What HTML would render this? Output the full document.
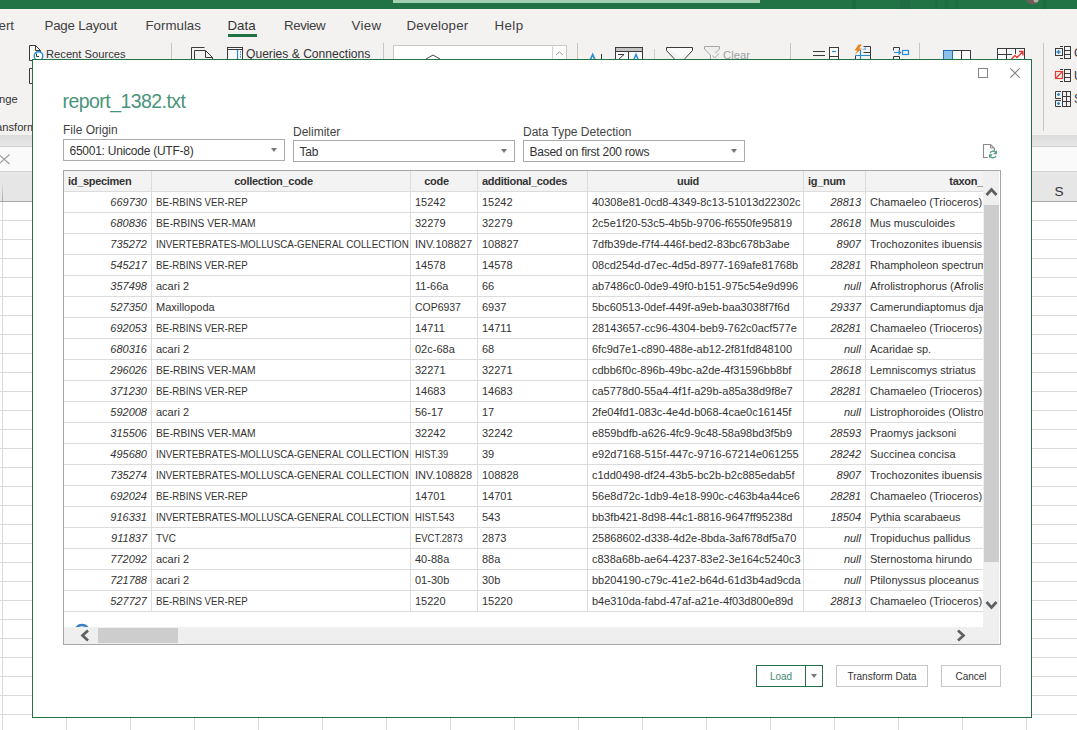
<!DOCTYPE html>
<html><head><meta charset="utf-8">
<style>
*{margin:0;padding:0}
html,body{width:1077px;height:730px;overflow:hidden;background:#fff}
body{position:relative;font-family:"Liberation Sans",sans-serif;color:#333}
.a{position:absolute}
/* excel bg */
#topbar{left:0;top:0;width:1077px;height:9px;background:#217346}
#search{left:393px;top:0;width:367px;height:3px;background:#a3cfb3}
#ribbon{left:0;top:9px;width:1077px;height:126px;background:#f3f2f1}
.tab{position:absolute;top:17.5px;font-size:13.3px;color:#404040;white-space:nowrap;line-height:15px}
#uline{left:228px;top:34px;width:29px;height:3px;background:#217346}
.rt{position:absolute;font-size:11.2px;color:#333;white-space:nowrap;line-height:13px}
.sep{position:absolute;width:1px;background:#c8c6c4}
#shadow{left:0;top:135px;width:1077px;height:12px;background:linear-gradient(#dcdcdc,#e8e8e8);border-bottom:1px solid #cfcfcf;box-sizing:border-box}
#fbar{left:0;top:147px;width:1077px;height:24px;background:#fafafa}
#colhdr{left:0;top:171px;width:1077px;height:31px;background:#e6e6e6;border-top:1px solid #d4d4d4;border-bottom:1px solid #a9a9a9;box-sizing:border-box}
.gv{position:absolute;top:202px;width:1px;height:528px;background:#dadada}
.gh{position:absolute;left:0;width:1077px;height:1px;background:#dadada}
/* dialog */
#dlg{left:32px;top:59px;width:1000px;height:659px;background:#fff;border:1px solid #217346;box-sizing:border-box}
#title{left:62.5px;top:90px;font-size:19.5px;letter-spacing:-0.55px;line-height:22px;color:#4a957a;white-space:nowrap}
.lbl{position:absolute;font-size:12px;line-height:14px;color:#444;white-space:nowrap}
.dd{position:absolute;height:22px;width:222px;border:1px solid #ababab;box-sizing:border-box;background:#fff}
.ddt{position:absolute;left:5.5px;top:4px;font-size:12px;letter-spacing:-0.25px;line-height:14px;color:#333;white-space:nowrap}
.dda{position:absolute;top:8px;width:0;height:0;border-left:3px solid transparent;border-right:3px solid transparent;border-top:4px solid #777}
/* table */
#tbl{left:63px;top:170px;width:938px;height:475px;border:1px solid #a6a6a6;box-sizing:border-box;background:#fff}
#thead{left:64px;top:171px;width:935px;height:20px;background:#f3f3f3}
.hl{position:absolute;left:64px;width:919px;height:1px;background:#dcdcdc}
.vl{position:absolute;top:171px;width:1px;height:440px;background:#dcdcdc}
#clip{left:0;top:0;width:983px;height:730px;overflow:hidden}
.c{position:absolute;height:20px;line-height:20px;font-size:11px;color:#333;white-space:nowrap;overflow:hidden;padding-left:4px;box-sizing:border-box}
.c.num{text-align:right;padding-left:0;padding-right:4px;font-style:italic}
.sx{display:inline-block;transform-origin:0 50%}
.hc{position:absolute;height:20px;line-height:20px;font-size:11px;font-weight:bold;color:#333;white-space:nowrap;overflow:hidden;letter-spacing:-0.3px}
#vtrack{left:983px;top:171px;width:16px;height:456px;background:#efefef}
#vthumb{left:984px;top:205px;width:15px;height:357px;background:#cdcdcd}
#htrack{left:64px;top:627px;width:935px;height:17px;background:#efefef}
#hthumb{left:98px;top:628px;width:80px;height:15px;background:#cdcdcd}
/* buttons */
.btn{position:absolute;top:665px;height:22px;border:1px solid #c6c6c6;box-sizing:border-box;font-size:10px;line-height:22px;text-align:center;color:#333;background:#fff}
</style></head><body>
<!-- Excel background -->
<div class="a" id="topbar"></div>
<div class="a" id="search"></div>
<svg class="a" style="left:760px;top:0" width="317" height="9"><path d="M92 0h4v9h-4z" fill="#1d6a40"/><path d="M140 0h10v9h-10zM175 0h3v9h-3zM185 0h3v9h-3zM195 0h3v9h-3z" fill="#1f6e43"/><circle cx="1032.5" cy="-2" r="6.5" transform="translate(-760 0)" fill="#6e5d58"/><circle cx="1036" cy="0" r="2.5" transform="translate(-760 0)" fill="#b9aaa5"/><path d="M1045 9A14 14 0 0 1 1075 0" transform="translate(-760 0)" fill="none" stroke="#1d6940" stroke-width="3"/></svg>
<div class="a" id="ribbon"></div>
<div class="tab" style="left:-1.5px">ert</div>
<div class="tab" style="left:44.5px;letter-spacing:-0.2px">Page Layout</div>
<div class="tab" style="left:145.5px">Formulas</div>
<div class="tab" style="left:227.5px;color:#333">Data</div>
<div class="tab" style="left:284px;letter-spacing:-0.38px">Review</div>
<div class="tab" style="left:351.5px;letter-spacing:0.3px">View</div>
<div class="tab" style="left:406.5px;letter-spacing:0.12px">Developer</div>
<div class="tab" style="left:494.5px;letter-spacing:0.43px">Help</div>
<div class="a" id="uline"></div>
<div class="rt" style="left:46px;top:48px;font-size:11.2px">Recent Sources</div>
<div class="rt" style="left:246px;top:48px;font-size:12.1px">Queries &amp; Connections</div>
<div class="rt" style="left:723px;top:49px;font-size:11.3px;color:#a0a0a0">Clear</div>
<div class="rt" style="left:-1px;top:93px">nge</div>
<div class="rt" style="left:-4px;top:121px">ansform</div>
<div class="sep" style="left:171px;top:43px;height:88px"></div>
<div class="sep" style="left:383px;top:43px;height:88px"></div>
<div class="sep" style="left:577px;top:43px;height:88px"></div>
<div class="sep" style="left:790px;top:43px;height:88px"></div>
<div class="sep" style="left:919px;top:43px;height:88px"></div>
<div class="sep" style="left:1043px;top:43px;height:88px"></div>
<svg class="a" style="left:0;top:0" width="1077" height="135">
<g fill="none" stroke="#3b3b3b" stroke-width="1">
<!-- recent sources -->
<path d="M32 60.5H29.5V45.5H35.5L40.5 50.5V52" fill="#fafafa"/><path d="M35.5 45.5V50.5H40.5"/>
<path d="M32.5 68.5H29.5V83.5H32.5"/>
<!-- existing connections -->
<path d="M191.5 60V47.5H204.5"/><path d="M194.5 60V50.5H205.5L212.5 57.5V60"/><path d="M205.5 50.5V57.5H212.5"/>
<!-- queries -->
<rect x="227.5" y="47.5" width="15" height="14" fill="#fafafa"/><path d="M227.5 49.5H242.5"/>
<!-- sort -->
<path d="M601.5 54V60"/><path d="M654.5 49V60" stroke="#cfcfcf"/>
<rect x="615.5" y="47.5" width="27" height="14" fill="#fafafa"/><rect x="616" y="48" width="26" height="3" fill="#c4c4c4" stroke="none"/><path d="M615.5 51.5H642.5M628.5 51.5V60"/>
<path d="M618 54.5H624L618 60H624"/>
<!-- filter -->
<path d="M666.5 47.5H692.5V50.5L685 58.5V60M666.5 47.5V50.5L674 58.5V60" fill="#fafafa"/>
<path d="M704.5 46.5H719.5V49L715 53.5M704.5 46.5V49L710.5 55V60" stroke="#a6a6a6" fill="#eeeeee"/><path d="M712.5 55.5L714.5 58L719 53.5" stroke="#a6a6a6"/>
<!-- data tools -->
<path d="M813 51.5H825M813 55.5H825"/>
<rect x="829.5" y="47.5" width="9" height="14" fill="#fafafa"/><path d="M829.5 56.5H838.5"/>
<path d="M855.5 60V55.5M863.5 46.5H870.5V60M863.5 52.5H870.5"/>
<path d="M899.5 47.5H893.5V50.5M899.5 47.5V50.5M893.5 60V56.5H899.5V60"/>
<rect x="943.5" y="50.5" width="27" height="10" fill="#fafafa"/><path d="M952.5 50.5V60M961.5 50.5V60"/>
<rect x="997.5" y="48.5" width="27" height="12" fill="#fafafa"/><path d="M1006.5 48.5V60M1015.5 48.5V54M997.5 54.5H1012"/>
<!-- outline -->
<rect x="1055.5" y="48.5" width="7" height="7"/><path d="M1060 46.5H1063M1060 58.5H1063"/><rect x="1064.5" y="46.5" width="6" height="12"/><path d="M1064.5 50.5H1070.5M1064.5 54.5H1070.5"/>
<path d="M1060 69.5H1063M1060 81.5H1063"/><rect x="1064.5" y="69.5" width="6" height="12"/><path d="M1064.5 73.5H1070.5M1064.5 77.5H1070.5"/>
<path d="M1061 91.5H1055.5V98.5H1061M1061 100.5H1055.5V106.5H1061"/><rect x="1062.5" y="91.5" width="8" height="15"/><path d="M1062.5 96.5H1070.5M1062.5 101.5H1070.5M1066.5 91.5V106.5"/>
<!-- gallery -->
<rect x="393.5" y="45.5" width="173" height="20" fill="#fff" stroke="#c8c8c8"/><path d="M552.5 45.5V65" stroke="#d4d4d4"/><path d="M556 55L559.5 52L563 55" stroke="#9a9a9a"/>
<path d="M426 59L433 55L440 59" stroke="#444"/>
</g>
<g fill="none" stroke="#2a8ad4" stroke-width="1.2">
<circle cx="38.5" cy="56" r="4.3" fill="#fff" stroke-width="1.4"/>
<path d="M237.5 50V60" /><path d="M240 52H241M240 54.5H241M240 57H241" stroke-width="1.4"/>
<path d="M832 51.5H836" />
<path d="M860.5 50V60M855.5 55.5H870" /><path d="M862 50L866 46.5V50Z" fill="#8cc0ea" stroke="none"/>
<path d="M894 52.5H900.5M898.5 50.5L900.5 52.5L898.5 54.5"/><rect x="902.5" y="50.5" width="6" height="4"/>
<path d="M1058.5 50V54M1056.5 52H1060.5" stroke-width="1.5"/>
<path d="M1058.5 93V96M1057 94.5H1060M1058.5 102V105M1057 103.5H1060" stroke-width="1.3"/>
</g>
<path d="M590 60.5L592.7 54.5L595.3 60.5" stroke="#2a8ad4" stroke-width="1.7" fill="none"/>
<path d="M633.5 60.5L636 54.5L638.5 60.5" stroke="#2a8ad4" stroke-width="1.5" fill="none"/>
<rect x="944" y="51" width="8" height="9" fill="#8cc0ea"/><path d="M943.5 50.5H952.5V60M943.5 50.5V60" stroke="#1f6fc0" fill="none"/>
<path d="M858.5 44.5L854.5 50.5H857.5L854.5 55L862 48.5H859L862 44.5Z" fill="#e8831e"/>
<path d="M1011 59.5L1015 55.5L1017 57.5L1023 51.5M1019 51.5H1023V55.5" fill="none" stroke="#e53935" stroke-width="1.3"/>
<rect x="1055.5" y="71.5" width="7" height="7" fill="none" stroke="#e53935" stroke-width="1.2"/><path d="M1056 78L1062 72" stroke="#e53935" stroke-width="1.2"/>
<path d="M36.5 53.5V56.5H39" stroke="#333" fill="none"/>
</svg>
<div class="a" id="shadow"></div>
<div class="a" id="fbar"></div>
<div class="a" id="colhdr"></div>
<div class="a" style="left:1054.5px;top:184px;font-size:13.6px;line-height:16px;color:#333">S</div>
<div class="rt" style="left:1074px;top:47px;font-size:12px">G</div><div class="rt" style="left:1074px;top:70px;font-size:12px">U</div><div class="rt" style="left:1074px;top:93px;font-size:12px">S</div>
<div class="gv" style="left:2px"></div>
<div class="gv" style="left:66px"></div>
<div class="gv" style="left:130px"></div>
<div class="gv" style="left:194px"></div>
<div class="gv" style="left:258px"></div>
<div class="gv" style="left:322px"></div>
<div class="gv" style="left:386px"></div>
<div class="gv" style="left:450px"></div>
<div class="gv" style="left:514px"></div>
<div class="gv" style="left:578px"></div>
<div class="gv" style="left:642px"></div>
<div class="gv" style="left:706px"></div>
<div class="gv" style="left:770px"></div>
<div class="gv" style="left:834px"></div>
<div class="gv" style="left:898px"></div>
<div class="gv" style="left:962px"></div>
<div class="gv" style="left:1026px"></div>
<div class="gh" style="top:220px"></div>
<div class="gh" style="top:239px"></div>
<div class="gh" style="top:258px"></div>
<div class="gh" style="top:277px"></div>
<div class="gh" style="top:296px"></div>
<div class="gh" style="top:315px"></div>
<div class="gh" style="top:334px"></div>
<div class="gh" style="top:353px"></div>
<div class="gh" style="top:372px"></div>
<div class="gh" style="top:391px"></div>
<div class="gh" style="top:410px"></div>
<div class="gh" style="top:429px"></div>
<div class="gh" style="top:448px"></div>
<div class="gh" style="top:467px"></div>
<div class="gh" style="top:486px"></div>
<div class="gh" style="top:505px"></div>
<div class="gh" style="top:524px"></div>
<div class="gh" style="top:543px"></div>
<div class="gh" style="top:562px"></div>
<div class="gh" style="top:581px"></div>
<div class="gh" style="top:600px"></div>
<div class="gh" style="top:619px"></div>
<div class="gh" style="top:638px"></div>
<div class="gh" style="top:657px"></div>
<div class="gh" style="top:676px"></div>
<div class="gh" style="top:695px"></div>
<div class="gh" style="top:714px"></div>
<div class="gh" style="top:733px"></div>
<svg class="a" style="left:0;top:150px" width="14" height="18"><path d="M-1 4.5L9.5 14M9.5 4.5L-1 14" stroke="#9c9c9c" stroke-width="1.1"/></svg>
<div class="a" style="left:2px;top:182px;width:1px;height:19px;background:linear-gradient(#e6e6e6,#a8a8a8)"></div>
<!-- dialog -->
<div class="a" id="dlg"></div>
<div class="a" style="left:978px;top:68px;width:10px;height:10px;border:1px solid #858585;box-sizing:border-box"></div>
<svg class="a" style="left:1008px;top:66px" width="14" height="14"><path d="M2.3 2.3L11.7 11.7M11.7 2.3L2.3 11.7" stroke="#808080" stroke-width="1.1"/></svg>
<div class="a" id="title">report_1382.txt</div>
<div class="lbl" style="left:63px;top:123px">File Origin</div>
<div class="lbl" style="left:293px;top:125px">Delimiter</div>
<div class="lbl" style="left:523px;top:125px">Data Type Detection</div>
<div class="dd" style="left:63px;top:139px"><div class="ddt">65001: Unicode (UTF-8)</div><div class="dda" style="left:207px"></div></div>
<div class="dd" style="left:293px;top:140px"><div class="ddt">Tab</div><div class="dda" style="left:207px"></div></div>
<div class="dd" style="left:523px;top:140px"><div class="ddt">Based on first 200 rows</div><div class="dda" style="left:207px"></div></div>
<svg class="a" style="left:975px;top:138px" width="30" height="27"><path d="M12.8 19.5H8.5V6.5H15.5L19.5 10.5V12.5" fill="none" stroke="#8a8a8a" stroke-width="1.1"/><path d="M15.5 7V10H18.5" fill="none" stroke="#8a8a8a"/><path d="M15 14.8A3.6 3.6 0 0 1 20.6 14" fill="none" stroke="#4f9c7c" stroke-width="1.3"/><path d="M22 12.2V16.2H18.2Z" fill="#4f9c7c"/><path d="M21 18A3.6 3.6 0 0 1 15.4 18.8" fill="none" stroke="#4f9c7c" stroke-width="1.3"/><path d="M14 20.2V16.2H17.8Z" fill="#4f9c7c"/></svg>
<!-- table -->
<div class="a" id="tbl"></div>
<div class="a" id="thead"></div>
<div class="a" id="clip">
<div class="hl" style="top:191px"></div>
<div class="hl" style="top:212px"></div>
<div class="hl" style="top:233px"></div>
<div class="hl" style="top:254px"></div>
<div class="hl" style="top:275px"></div>
<div class="hl" style="top:296px"></div>
<div class="hl" style="top:317px"></div>
<div class="hl" style="top:338px"></div>
<div class="hl" style="top:359px"></div>
<div class="hl" style="top:380px"></div>
<div class="hl" style="top:401px"></div>
<div class="hl" style="top:422px"></div>
<div class="hl" style="top:443px"></div>
<div class="hl" style="top:464px"></div>
<div class="hl" style="top:485px"></div>
<div class="hl" style="top:506px"></div>
<div class="hl" style="top:527px"></div>
<div class="hl" style="top:548px"></div>
<div class="hl" style="top:569px"></div>
<div class="hl" style="top:590px"></div>
<div class="hl" style="top:611px"></div>
<div class="vl" style="left:151px"></div>
<div class="vl" style="left:410px"></div>
<div class="vl" style="left:477px"></div>
<div class="vl" style="left:587px"></div>
<div class="vl" style="left:803px"></div>
<div class="vl" style="left:865px"></div>
<div class="hc" style="left:64px;width:87px;top:171px;text-align:left;padding-left:4px;box-sizing:border-box">id_specimen</div>
<div class="hc" style="left:152px;width:258px;top:171px;text-align:center;padding-right:15px;box-sizing:border-box">collection_code</div>
<div class="hc" style="left:411px;width:66px;top:171px;text-align:center;padding-right:15px;box-sizing:border-box">code</div>
<div class="hc" style="left:478px;width:109px;top:171px;text-align:left;padding-left:4px;box-sizing:border-box">additional_codes</div>
<div class="hc" style="left:588px;width:215px;top:171px;text-align:center;padding-right:15px;box-sizing:border-box">uuid</div>
<div class="hc" style="left:804px;width:61px;top:171px;text-align:left;padding-left:4px;box-sizing:border-box">ig_num</div>
<div class="hc" style="left:866px;width:117px;top:171px;text-align:right;box-sizing:border-box">taxon_</div>
<div class="c num" style="left:64px;width:87px;top:192px">669730</div>
<div class="c" style="left:152px;width:258px;top:192px"><span class="sx" style="transform:scaleX(0.883)">BE-RBINS VER-REP</span></div>
<div class="c" style="left:411px;width:66px;top:192px">15242</div>
<div class="c" style="left:478px;width:109px;top:192px">15242</div>
<div class="c" style="left:588px;width:215px;top:192px">40308e81-0cd8-4349-8c13-51013d22302c</div>
<div class="c num" style="left:804px;width:61px;top:192px">28813</div>
<div class="c" style="left:866px;width:117px;top:192px">Chamaeleo (Trioceros)</div>
<div class="c num" style="left:64px;width:87px;top:213px">680836</div>
<div class="c" style="left:152px;width:258px;top:213px"><span class="sx" style="transform:scaleX(0.931)">BE-RBINS VER-MAM</span></div>
<div class="c" style="left:411px;width:66px;top:213px">32279</div>
<div class="c" style="left:478px;width:109px;top:213px">32279</div>
<div class="c" style="left:588px;width:215px;top:213px">2c5e1f20-53c5-4b5b-9706-f6550fe95819</div>
<div class="c num" style="left:804px;width:61px;top:213px">28618</div>
<div class="c" style="left:866px;width:117px;top:213px">Mus musculoides</div>
<div class="c num" style="left:64px;width:87px;top:234px">735272</div>
<div class="c" style="left:152px;width:258px;top:234px"><span class="sx" style="transform:scaleX(0.89)">INVERTEBRATES-MOLLUSCA-GENERAL COLLECTION</span></div>
<div class="c" style="left:411px;width:66px;top:234px">INV.108827</div>
<div class="c" style="left:478px;width:109px;top:234px">108827</div>
<div class="c" style="left:588px;width:215px;top:234px">7dfb39de-f7f4-446f-bed2-83bc678b3abe</div>
<div class="c num" style="left:804px;width:61px;top:234px">8907</div>
<div class="c" style="left:866px;width:117px;top:234px">Trochozonites ibuensis</div>
<div class="c num" style="left:64px;width:87px;top:255px">545217</div>
<div class="c" style="left:152px;width:258px;top:255px"><span class="sx" style="transform:scaleX(0.883)">BE-RBINS VER-REP</span></div>
<div class="c" style="left:411px;width:66px;top:255px">14578</div>
<div class="c" style="left:478px;width:109px;top:255px">14578</div>
<div class="c" style="left:588px;width:215px;top:255px">08cd254d-d7ec-4d5d-8977-169afe81768b</div>
<div class="c num" style="left:804px;width:61px;top:255px">28281</div>
<div class="c" style="left:866px;width:117px;top:255px">Rhampholeon spectrum</div>
<div class="c num" style="left:64px;width:87px;top:276px">357498</div>
<div class="c" style="left:152px;width:258px;top:276px">acari 2</div>
<div class="c" style="left:411px;width:66px;top:276px">11-66a</div>
<div class="c" style="left:478px;width:109px;top:276px">66</div>
<div class="c" style="left:588px;width:215px;top:276px">ab7486c0-0de9-49f0-b151-975c54e9d996</div>
<div class="c num" style="left:804px;width:61px;top:276px">null</div>
<div class="c" style="left:866px;width:117px;top:276px">Afrolistrophorus (Afrolistrophorus)</div>
<div class="c num" style="left:64px;width:87px;top:297px">527350</div>
<div class="c" style="left:152px;width:258px;top:297px">Maxillopoda</div>
<div class="c" style="left:411px;width:66px;top:297px"><span class="sx" style="transform:scaleX(0.95)">COP6937</span></div>
<div class="c" style="left:478px;width:109px;top:297px">6937</div>
<div class="c" style="left:588px;width:215px;top:297px">5bc60513-0def-449f-a9eb-baa3038f7f6d</div>
<div class="c num" style="left:804px;width:61px;top:297px">29337</div>
<div class="c" style="left:866px;width:117px;top:297px">Camerundiaptomus djaensis</div>
<div class="c num" style="left:64px;width:87px;top:318px">692053</div>
<div class="c" style="left:152px;width:258px;top:318px"><span class="sx" style="transform:scaleX(0.883)">BE-RBINS VER-REP</span></div>
<div class="c" style="left:411px;width:66px;top:318px">14711</div>
<div class="c" style="left:478px;width:109px;top:318px">14711</div>
<div class="c" style="left:588px;width:215px;top:318px">28143657-cc96-4304-beb9-762c0acf577e</div>
<div class="c num" style="left:804px;width:61px;top:318px">28281</div>
<div class="c" style="left:866px;width:117px;top:318px">Chamaeleo (Trioceros)</div>
<div class="c num" style="left:64px;width:87px;top:339px">680316</div>
<div class="c" style="left:152px;width:258px;top:339px">acari 2</div>
<div class="c" style="left:411px;width:66px;top:339px">02c-68a</div>
<div class="c" style="left:478px;width:109px;top:339px">68</div>
<div class="c" style="left:588px;width:215px;top:339px">6fc9d7e1-c890-488e-ab12-2f81fd848100</div>
<div class="c num" style="left:804px;width:61px;top:339px">null</div>
<div class="c" style="left:866px;width:117px;top:339px">Acaridae sp.</div>
<div class="c num" style="left:64px;width:87px;top:360px">296026</div>
<div class="c" style="left:152px;width:258px;top:360px"><span class="sx" style="transform:scaleX(0.931)">BE-RBINS VER-MAM</span></div>
<div class="c" style="left:411px;width:66px;top:360px">32271</div>
<div class="c" style="left:478px;width:109px;top:360px">32271</div>
<div class="c" style="left:588px;width:215px;top:360px">cdbb6f0c-896b-49bc-a2de-4f31596bb8bf</div>
<div class="c num" style="left:804px;width:61px;top:360px">28618</div>
<div class="c" style="left:866px;width:117px;top:360px">Lemniscomys striatus</div>
<div class="c num" style="left:64px;width:87px;top:381px">371230</div>
<div class="c" style="left:152px;width:258px;top:381px"><span class="sx" style="transform:scaleX(0.883)">BE-RBINS VER-REP</span></div>
<div class="c" style="left:411px;width:66px;top:381px">14683</div>
<div class="c" style="left:478px;width:109px;top:381px">14683</div>
<div class="c" style="left:588px;width:215px;top:381px">ca5778d0-55a4-4f1f-a29b-a85a38d9f8e7</div>
<div class="c num" style="left:804px;width:61px;top:381px">28281</div>
<div class="c" style="left:866px;width:117px;top:381px">Chamaeleo (Trioceros)</div>
<div class="c num" style="left:64px;width:87px;top:402px">592008</div>
<div class="c" style="left:152px;width:258px;top:402px">acari 2</div>
<div class="c" style="left:411px;width:66px;top:402px">56-17</div>
<div class="c" style="left:478px;width:109px;top:402px">17</div>
<div class="c" style="left:588px;width:215px;top:402px">2fe04fd1-083c-4e4d-b068-4cae0c16145f</div>
<div class="c num" style="left:804px;width:61px;top:402px">null</div>
<div class="c" style="left:866px;width:117px;top:402px">Listrophoroides (Olistrophoroides)</div>
<div class="c num" style="left:64px;width:87px;top:423px">315506</div>
<div class="c" style="left:152px;width:258px;top:423px"><span class="sx" style="transform:scaleX(0.931)">BE-RBINS VER-MAM</span></div>
<div class="c" style="left:411px;width:66px;top:423px">32242</div>
<div class="c" style="left:478px;width:109px;top:423px">32242</div>
<div class="c" style="left:588px;width:215px;top:423px">e859bdfb-a626-4fc9-9c48-58a98bd3f5b9</div>
<div class="c num" style="left:804px;width:61px;top:423px">28593</div>
<div class="c" style="left:866px;width:117px;top:423px">Praomys jacksoni</div>
<div class="c num" style="left:64px;width:87px;top:444px">495680</div>
<div class="c" style="left:152px;width:258px;top:444px"><span class="sx" style="transform:scaleX(0.89)">INVERTEBRATES-MOLLUSCA-GENERAL COLLECTION</span></div>
<div class="c" style="left:411px;width:66px;top:444px"><span class="sx" style="transform:scaleX(0.85)">HIST.39</span></div>
<div class="c" style="left:478px;width:109px;top:444px">39</div>
<div class="c" style="left:588px;width:215px;top:444px">e92d7168-515f-447c-9716-67214e061255</div>
<div class="c num" style="left:804px;width:61px;top:444px">28242</div>
<div class="c" style="left:866px;width:117px;top:444px">Succinea concisa</div>
<div class="c num" style="left:64px;width:87px;top:465px">735274</div>
<div class="c" style="left:152px;width:258px;top:465px"><span class="sx" style="transform:scaleX(0.89)">INVERTEBRATES-MOLLUSCA-GENERAL COLLECTION</span></div>
<div class="c" style="left:411px;width:66px;top:465px">INV.108828</div>
<div class="c" style="left:478px;width:109px;top:465px">108828</div>
<div class="c" style="left:588px;width:215px;top:465px">c1dd0498-df24-43b5-bc2b-b2c885edab5f</div>
<div class="c num" style="left:804px;width:61px;top:465px">8907</div>
<div class="c" style="left:866px;width:117px;top:465px">Trochozonites ibuensis</div>
<div class="c num" style="left:64px;width:87px;top:486px">692024</div>
<div class="c" style="left:152px;width:258px;top:486px"><span class="sx" style="transform:scaleX(0.883)">BE-RBINS VER-REP</span></div>
<div class="c" style="left:411px;width:66px;top:486px">14701</div>
<div class="c" style="left:478px;width:109px;top:486px">14701</div>
<div class="c" style="left:588px;width:215px;top:486px">56e8d72c-1db9-4e18-990c-c463b4a44ce6</div>
<div class="c num" style="left:804px;width:61px;top:486px">28281</div>
<div class="c" style="left:866px;width:117px;top:486px">Chamaeleo (Trioceros)</div>
<div class="c num" style="left:64px;width:87px;top:507px">916331</div>
<div class="c" style="left:152px;width:258px;top:507px"><span class="sx" style="transform:scaleX(0.89)">INVERTEBRATES-MOLLUSCA-GENERAL COLLECTION</span></div>
<div class="c" style="left:411px;width:66px;top:507px"><span class="sx" style="transform:scaleX(0.87)">HIST.543</span></div>
<div class="c" style="left:478px;width:109px;top:507px">543</div>
<div class="c" style="left:588px;width:215px;top:507px">bb3fb421-8d98-44c1-8816-9647ff95238d</div>
<div class="c num" style="left:804px;width:61px;top:507px">18504</div>
<div class="c" style="left:866px;width:117px;top:507px">Pythia scarabaeus</div>
<div class="c num" style="left:64px;width:87px;top:528px">911837</div>
<div class="c" style="left:152px;width:258px;top:528px"><span class="sx" style="transform:scaleX(0.9)">TVC</span></div>
<div class="c" style="left:411px;width:66px;top:528px"><span class="sx" style="transform:scaleX(0.86)">EVCT.2873</span></div>
<div class="c" style="left:478px;width:109px;top:528px">2873</div>
<div class="c" style="left:588px;width:215px;top:528px">25868602-d338-4d2e-8bda-3af678df5a70</div>
<div class="c num" style="left:804px;width:61px;top:528px">null</div>
<div class="c" style="left:866px;width:117px;top:528px">Tropiduchus pallidus</div>
<div class="c num" style="left:64px;width:87px;top:549px">772092</div>
<div class="c" style="left:152px;width:258px;top:549px">acari 2</div>
<div class="c" style="left:411px;width:66px;top:549px">40-88a</div>
<div class="c" style="left:478px;width:109px;top:549px">88a</div>
<div class="c" style="left:588px;width:215px;top:549px">c838a68b-ae64-4237-83e2-3e164c5240c3</div>
<div class="c num" style="left:804px;width:61px;top:549px">null</div>
<div class="c" style="left:866px;width:117px;top:549px">Sternostoma hirundo</div>
<div class="c num" style="left:64px;width:87px;top:570px">721788</div>
<div class="c" style="left:152px;width:258px;top:570px">acari 2</div>
<div class="c" style="left:411px;width:66px;top:570px">01-30b</div>
<div class="c" style="left:478px;width:109px;top:570px">30b</div>
<div class="c" style="left:588px;width:215px;top:570px">bb204190-c79c-41e2-b64d-61d3b4ad9cda</div>
<div class="c num" style="left:804px;width:61px;top:570px">null</div>
<div class="c" style="left:866px;width:117px;top:570px">Ptilonyssus ploceanus</div>
<div class="c num" style="left:64px;width:87px;top:591px">527727</div>
<div class="c" style="left:152px;width:258px;top:591px"><span class="sx" style="transform:scaleX(0.883)">BE-RBINS VER-REP</span></div>
<div class="c" style="left:411px;width:66px;top:591px">15220</div>
<div class="c" style="left:478px;width:109px;top:591px">15220</div>
<div class="c" style="left:588px;width:215px;top:591px">b4e310da-fabd-47af-a21e-4f03d800e89d</div>
<div class="c num" style="left:804px;width:61px;top:591px">28813</div>
<div class="c" style="left:866px;width:117px;top:591px">Chamaeleo (Trioceros)</div>
</div>
<div class="a" id="vtrack"></div>
<div class="a" id="vthumb"></div>
<svg class="a" style="left:70px;top:620px" width="24" height="10"><circle cx="12" cy="12" r="7" fill="none" stroke="#3a7fc0" stroke-width="2.6"/></svg>
<div class="a" id="htrack"></div>
<div class="a" id="hthumb"></div>
<svg class="a" style="left:985px;top:186px" width="14" height="12"><path d="M1.5 9L6.5 3.5L11.5 9" fill="none" stroke="#5f5f5f" stroke-width="2.7"/></svg>
<svg class="a" style="left:985px;top:599px" width="14" height="12"><path d="M1.5 3L6.5 8.5L11.5 3" fill="none" stroke="#5f5f5f" stroke-width="2.7"/></svg>
<svg class="a" style="left:79px;top:629px" width="12" height="14"><path d="M9 1.5L3.5 6.5L9 11.5" fill="none" stroke="#5f5f5f" stroke-width="2.7"/></svg>
<svg class="a" style="left:955px;top:629px" width="12" height="14"><path d="M3 1.5L8.5 6.5L3 11.5" fill="none" stroke="#5f5f5f" stroke-width="2.7"/></svg>
<!-- buttons -->
<div class="btn" style="left:756px;width:67px;border-color:#217346"><div class="a" style="left:0;top:0;width:48px;text-align:center;color:#3f8a6c">Load</div><div class="a" style="left:48px;top:-1px;width:1px;height:22px;background:#217346"></div><div class="a" style="left:54px;top:8px;width:0;height:0;border-left:3px solid transparent;border-right:3px solid transparent;border-top:4px solid #777"></div></div>
<div class="btn" style="left:836px;width:92px">Transform Data</div>
<div class="btn" style="left:941px;width:60px">Cancel</div>
</body></html>
